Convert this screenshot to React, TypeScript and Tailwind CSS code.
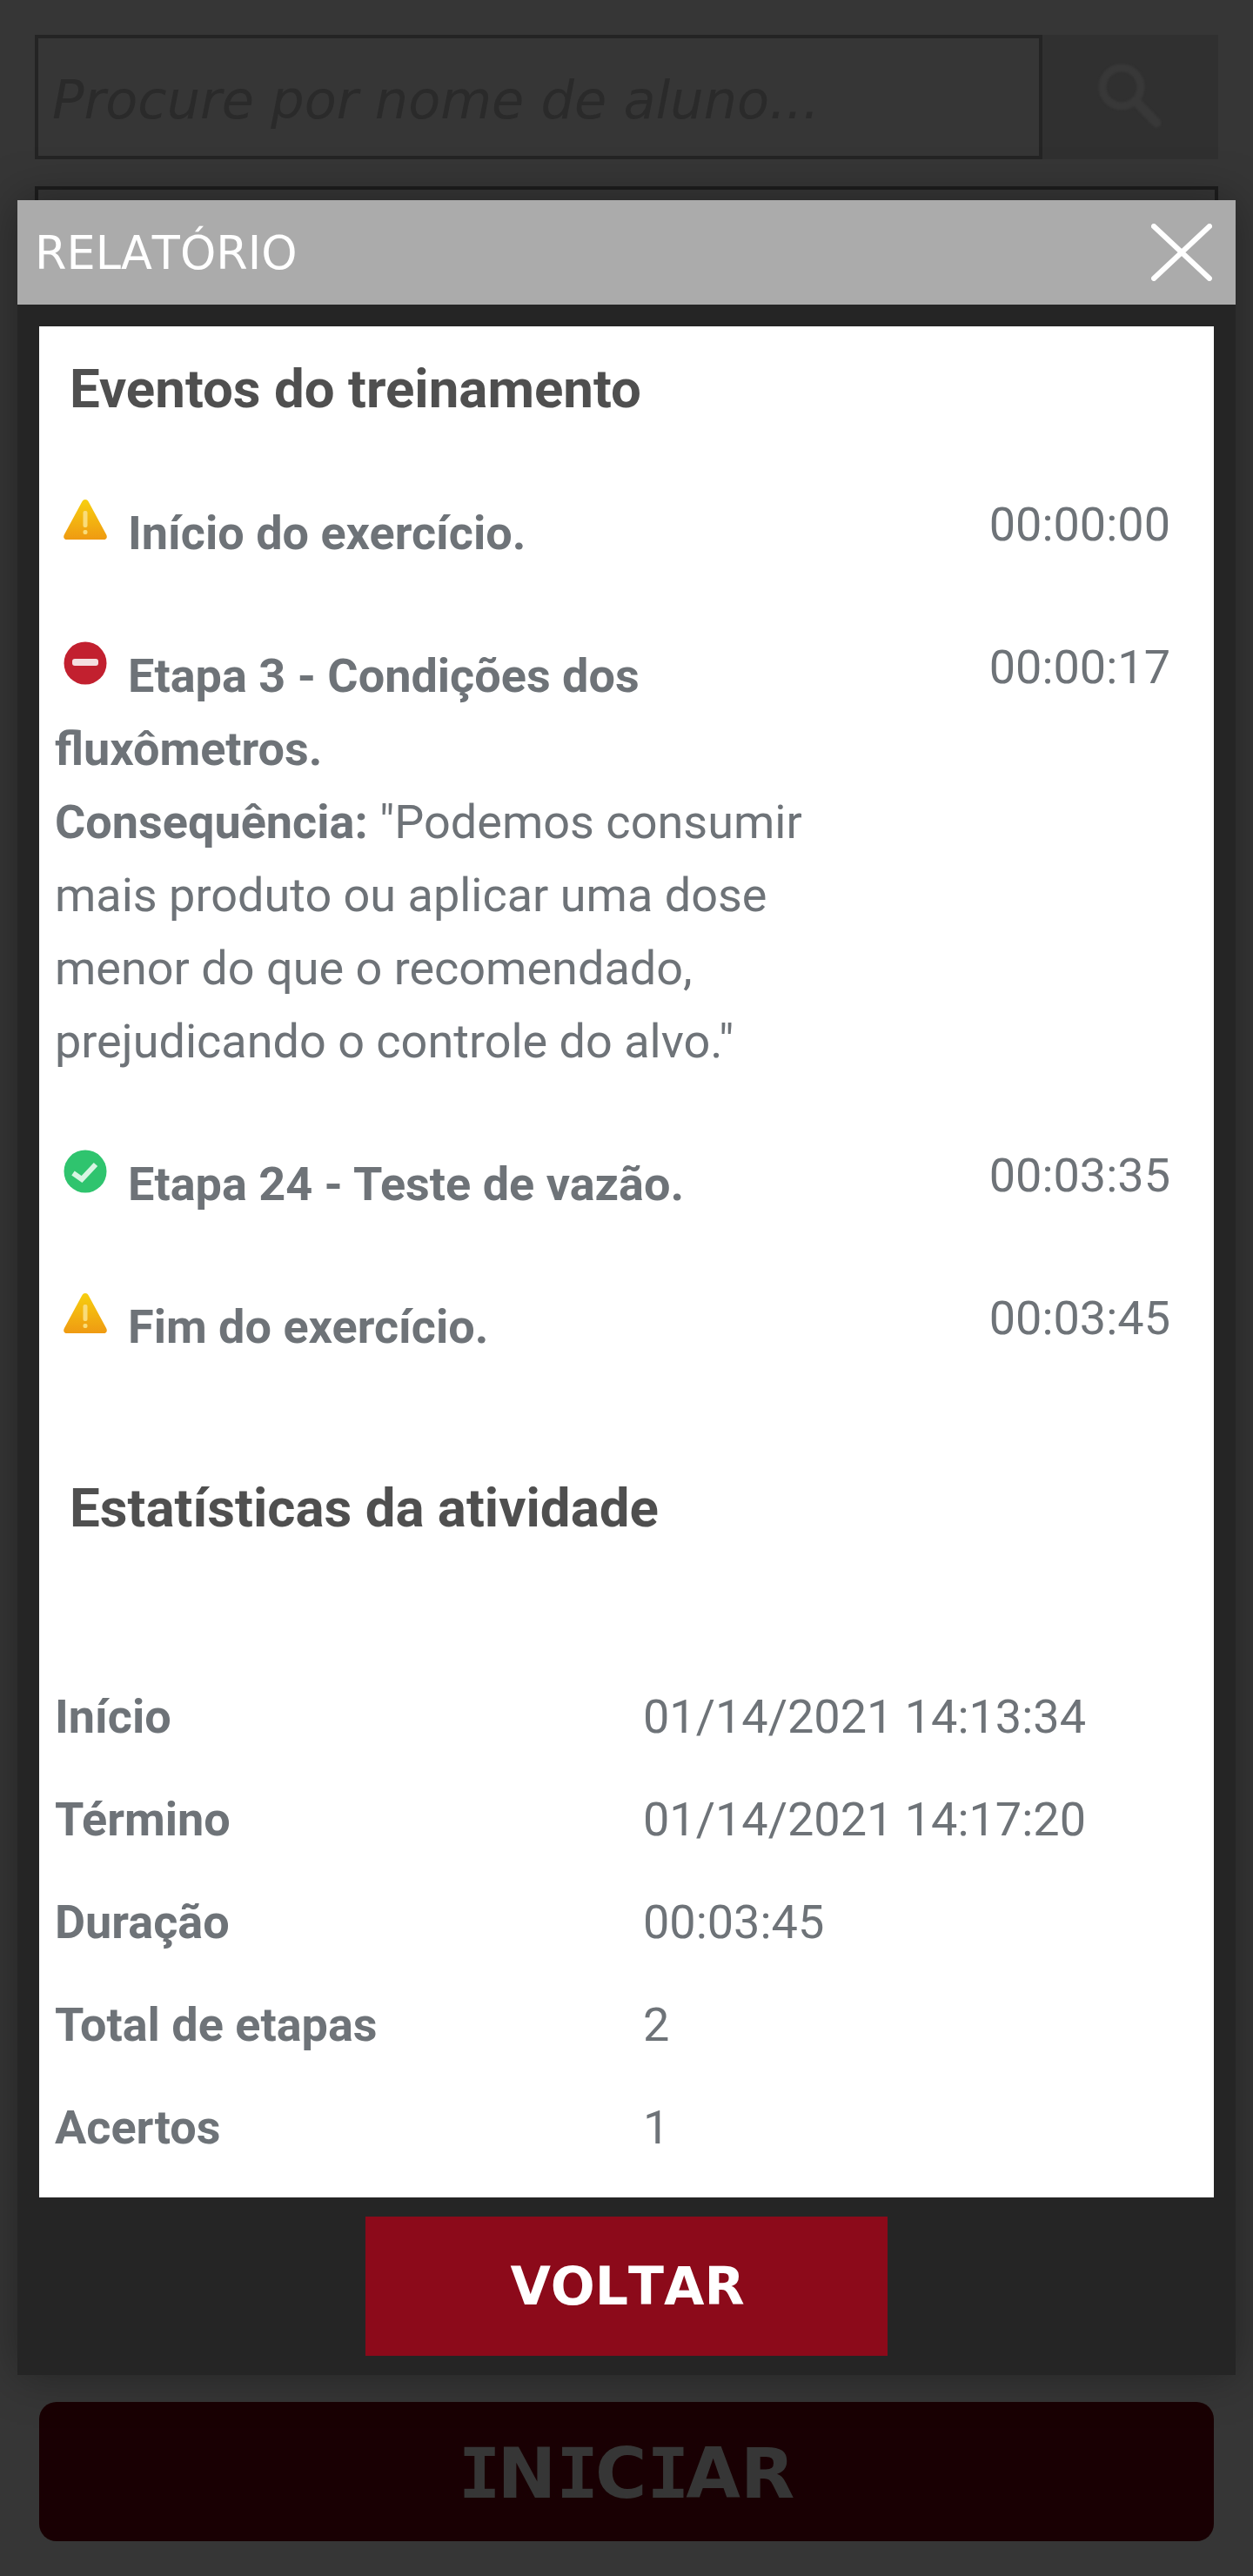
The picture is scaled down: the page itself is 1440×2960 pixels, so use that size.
import React from "react";

type Kind = "warn" | "error" | "ok";

const WarnIcon = () => (
  <svg viewBox="0 0 52 48" className="w-[52px] h-[48px] blur-[0.5px]">
    <defs>
      <linearGradient id="warnFill" x1="0" y1="0" x2="0" y2="1">
        <stop offset="0" stopColor="#f7cf0f" />
        <stop offset="1" stopColor="#ef9a12" />
      </linearGradient>
    </defs>
    <path d="M26 1 C28 1 29 2 30 4 L50 41 C52 45 50 47 47 47 L5 47 C2 47 0 45 2 41 L22 4 C23 2 24 1 26 1 Z" fill="url(#warnFill)" />
    <rect x="23.5" y="14" width="5" height="19" rx="2" fill="#f9dc7a" />
    <rect x="23.5" y="36" width="5" height="5" rx="2" fill="#f9dc7a" />
  </svg>
);

const ErrorIcon = () => (
  <svg viewBox="0 0 50 50" className="w-[50px] h-[50px] blur-[0.5px]">
    <circle cx="25" cy="25" r="24.5" fill="#c2202f" />
    <rect x="10" y="20" width="30" height="8" rx="3" fill="#f4dfe0" />
  </svg>
);

const OkIcon = () => (
  <svg viewBox="0 0 50 50" className="w-[50px] h-[50px] blur-[0.5px]">
    <circle cx="25" cy="25" r="24.5" fill="#2fc46e" />
    <path d="M11 27 L21 34 L37 17" fill="none" stroke="#d8f5e3" strokeWidth="6" />
  </svg>
);

const icons: Record<Kind, React.ReactNode> = {
  warn: <WarnIcon />,
  error: <ErrorIcon />,
  ok: <OkIcon />,
};

const EventRow = ({ kind, time, children }: { kind: Kind; time: string; children: React.ReactNode }) => (
  <div className="flex justify-between">
    <p className="w-[905px] pl-[18px] leading-[84px] mt-[-2px] mb-[2px]">
      <span className="inline-block w-[66px] mr-[18px] relative h-[10px]">
        <span className={kind === "warn" ? "absolute left-[9px] top-[-48px]" : "absolute left-[10px] top-[-48px]"}>{icons[kind]}</span>
      </span>
      {children}
    </p>
    <span className="mr-[50px] leading-[84px] mt-[-12px] h-[72px]">{time}</span>
  </div>
);

const stats = [
  ["Início", "01/14/2021 14:13:34"],
  ["Término", "01/14/2021 14:17:20"],
  ["Duração", "00:03:45"],
  ["Total de etapas", "2"],
  ["Acertos", "1"],
];

export default function App() {
  return (
    <div className="relative h-[2960px] w-[1440px] overflow-hidden bg-[#363636] px-10 pt-10 font-['Roboto',sans-serif]">
      {/* dimmed page behind the modal */}
      <div className="flex h-[143px]">
        <div className="flex-1 border-[4px] border-[#242424] flex items-center pl-[16px]">
          <span className="text-[60.5px] italic text-[#2a2a2a] font-['DejaVu_Sans',sans-serif] [font-kerning:none] leading-none mt-[8px]">Procure por nome de aluno...</span>
        </div>
        <div className="w-[202px] bg-[#303030] flex items-center justify-center">
          <svg viewBox="0 0 72 73" className="w-[72px] h-[73px] mt-[-2px] blur-[1px]" fill="none" stroke="#383838">
            <circle cx="26" cy="26" r="22" strokeWidth="9" />
            <path d="M42 42 L66 67" strokeWidth="11" strokeLinecap="round" />
          </svg>
        </div>
      </div>
      <div className="mt-[31px] h-[200px] border-[4px] border-[#1d1d1d] border-b-0" />
      <div className="absolute left-[45px] top-[2760px] h-[160px] w-[1350px] rounded-[20px] bg-[#190003] flex items-center justify-center">
        <span className="mt-[4px] text-[81px] font-bold text-[#363636] font-['DejaVu_Sans',sans-serif] [font-kerning:none] leading-none">
          <span className="font-['DejaVu_Sans_Mono',monospace] tracking-[-4px]">I</span>N<span className="font-['DejaVu_Sans_Mono',monospace] tracking-[-4px]">I</span>C<span className="font-['DejaVu_Sans_Mono',monospace] tracking-[-4px]">I</span>AR
        </span>
      </div>

      {/* modal */}
      <div className="absolute left-[20px] top-[230px] h-[2499px] w-[1400px] bg-[#252525] shadow-[0_0_50px_rgba(0,0,0,0.35)]">
        <div className="flex h-[120px] items-center justify-between bg-[#ababab] pl-[20px] pr-[27px]">
          <span className="text-[52.5px] mt-[3px] text-white font-['DejaVu_Sans',sans-serif] [font-kerning:none] leading-none">RELATÓRIO</span>
          <svg viewBox="0 0 70 66" className="w-[70px] h-[66px]" stroke="#ffffff" strokeWidth="6" strokeLinecap="round">
            <path d="M3 3 L67 63 M67 3 L3 63" />
          </svg>
        </div>
        <div className="mx-[25px] mt-[25px] h-[2150px] bg-white text-[54px] text-[#6e7378]">
          <h2 className="pl-[35px] pt-[30px] text-[61.8px] font-bold leading-[84px] text-[#4f4f4f]">Eventos do treinamento</h2>
          <div className="mt-[84px] flex flex-col gap-[80px]">
            <EventRow kind="warn" time="00:00:00"><b>Início do exercício.</b></EventRow>
            <EventRow kind="error" time="00:00:17">
              <b>Etapa 3 - Condições dos fluxômetros.</b>
              <br />
              <b>Consequência:</b> "Podemos consumir mais produto ou aplicar uma dose menor do que o recomendado, prejudicando o controle do alvo."
            </EventRow>
            <EventRow kind="ok" time="00:03:35"><b>Etapa 24 - Teste de vazão.</b></EventRow>
            <EventRow kind="warn" time="00:03:45"><b>Fim do exercício.</b></EventRow>
          </div>
          <h2 className="pl-[35px] mt-[122px] text-[61.8px] font-bold leading-[84px] text-[#4f4f4f]">Estatísticas da atividade</h2>
          <div className="mt-[138px] flex flex-col pl-[18px]">
            {stats.map(([label, value]) => (
              <div key={label} className="flex h-[118px] items-center">
                <b className="w-[676px]">{label}</b>
                <span>{value}</span>
              </div>
            ))}
          </div>
        </div>
        <div className="mt-[22px] flex justify-center">
          <button className="h-[160px] w-[600px] bg-[#8c0a1a] pl-[2px] text-[60px] font-bold text-white font-['DejaVu_Sans',sans-serif] [font-kerning:none]">VOLTAR</button>
        </div>
      </div>
    </div>
  );
}
